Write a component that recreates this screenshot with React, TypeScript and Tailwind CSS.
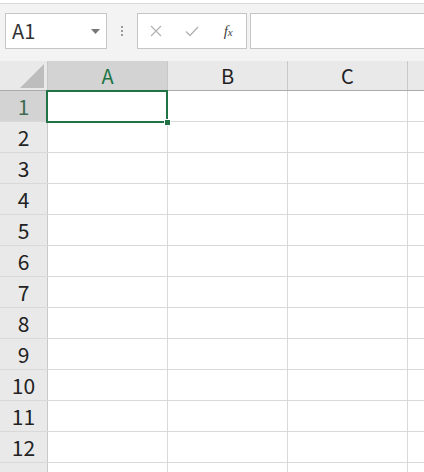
import React from "react";

const font = { fontFamily: '"Noto Sans CJK SC", "Noto Sans", sans-serif' };

const columns = ["A", "B", "C", ""];
const rows = [1, 2, 3, 4, 5, 6, 7, 8, 9, 10, 11, 12, 13];

const App = () => {
  return (
    <div className="w-[424px] h-[472px] overflow-hidden bg-white select-none" style={font}>
      {/* toolbar */}
      <div className="h-[58px] bg-[#f3f3f3] border-t border-[#dadada] mt-[3px] flex items-start pt-[9px] pl-[5px]">
        <div className="w-[102px] h-[36px] bg-white border border-[#c6c6c6] flex items-center justify-between pl-[6px] pr-[6px]">
          <span className="text-[20px] text-[#333] leading-none">A1</span>
          <svg width="9" height="5" viewBox="0 0 9 5">
            <path d="M0 0h9L4.5 5z" fill="#777" />
          </svg>
        </div>
        <div className="w-[30px] h-[36px] flex flex-col items-center justify-center gap-[2px]">
          <span className="w-[2px] h-[2px] bg-[#9a9a9a]" />
          <span className="w-[2px] h-[2px] bg-[#9a9a9a]" />
          <span className="w-[2px] h-[2px] bg-[#9a9a9a]" />
        </div>
        <div className="w-[110px] h-[36px] bg-white border border-[#c6c6c6] flex items-center">
          <div className="w-[37px] flex justify-center">
            <svg width="12" height="12" viewBox="0 0 12 12">
              <path d="M1 1l10 10M11 1L1 11" stroke="#b3b3b3" strokeWidth="1.3" />
            </svg>
          </div>
          <div className="w-[36px] flex justify-center">
            <svg width="14" height="11" viewBox="0 0 14 11">
              <path d="M1 5.5l4 4L13 1" stroke="#b3b3b3" strokeWidth="1.4" fill="none" />
            </svg>
          </div>
          <div className="w-[36px] flex justify-center">
            <span className="text-[15px] italic text-[#444] leading-none" style={{ fontFamily: '"Liberation Serif", serif' }}>
              f<span className="text-[11px]">x</span>
            </span>
          </div>
        </div>
        <div className="ml-[3px] flex-1 h-[36px] bg-white border border-[#c6c6c6] border-r-0" />
      </div>

      {/* grid */}
      <div className="relative">
        {/* header row */}
        <div className="flex h-[30px] bg-[#e9e9e9] border-b border-[#ababab]">
          <div className="w-[48px] shrink-0 border-r border-[#c8c8c8] flex items-end justify-end pr-[3px] pb-[2px]">
            <svg width="24" height="24" viewBox="0 0 24 24">
              <path d="M24 0V24H0z" fill="#bdbdbd" />
            </svg>
          </div>
          {columns.map((c, i) => (
            <div
              key={i}
              className={
                i === 0
                  ? "w-[120px] shrink-0 border-r border-[#c8c8c8] bg-[#d3d3d3] flex items-center justify-center text-[20px] text-[#217346] leading-none"
                  : "w-[120px] shrink-0 border-r border-[#c8c8c8] flex items-center justify-center text-[20px] text-[#222] leading-none"
              }
            >
              {c}
            </div>
          ))}
        </div>

        {rows.map((r, ri) => (
          <div key={r} className="flex h-[31px] border-b border-[#d9d9d9]">
            <div
              className={
                ri === 0
                  ? "w-[48px] shrink-0 border-r border-[#c8c8c8] bg-[#d3d3d3] flex items-center justify-center text-[21px] text-[#3f6b52] leading-none"
                  : "w-[48px] shrink-0 border-r border-[#c8c8c8] bg-[#e9e9e9] flex items-center justify-center text-[21px] text-[#222] leading-none"
              }
            >
              {r}
            </div>
            {columns.map((c, ci) => (
              <div key={ci} className="w-[120px] shrink-0 border-r border-[#d9d9d9]" />
            ))}
          </div>
        ))}

        {/* selected cell */}
        <div className="absolute left-[46px] top-[29px] w-[122px] h-[33px] border-2 border-[#217346] pointer-events-none" />
        <div className="absolute left-[164px] top-[58px] w-[7px] h-[7px] bg-[#217346] border border-white pointer-events-none" />
      </div>
    </div>
  );
};

export default App;
